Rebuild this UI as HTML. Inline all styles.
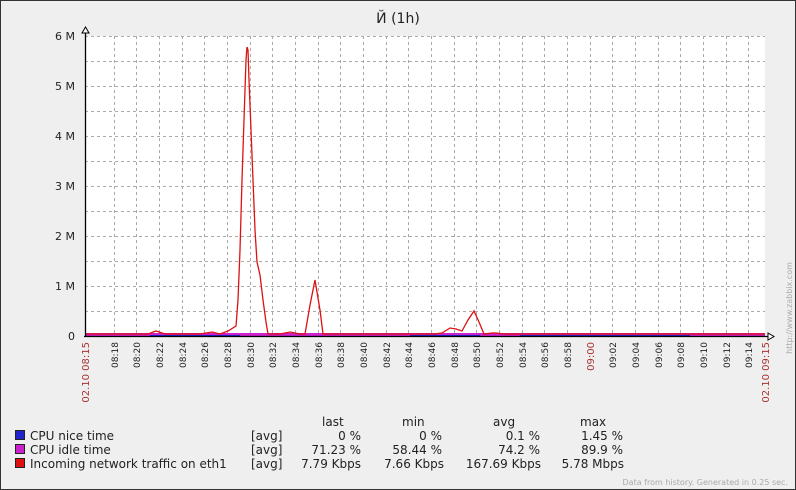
<!DOCTYPE html>
<html><head><meta charset="utf-8"><style>
body{margin:0;background:#efefef}
svg{display:block;font-family:"DejaVu Sans","Liberation Sans",sans-serif}
</style></head><body>
<svg width="796" height="490" viewBox="0 0 796 490" xmlns="http://www.w3.org/2000/svg">
<rect x="0.5" y="0.5" width="795" height="489" fill="#efefef" stroke="#333"/>
<text x="398" y="23" font-size="14" text-anchor="middle" fill="#222">Й (1h)</text>
<rect x="85" y="36" width="680" height="300" fill="#fff"/>
<g stroke="#aaa" stroke-dasharray="3,3" stroke-width="1">
<path d="M85 36.5H765M85 61.5H765M85 86.5H765M85 111.5H765M85 136.5H765M85 161.5H765M85 186.5H765M85 211.5H765M85 236.5H765M85 261.5H765M85 286.5H765M85 311.5H765"/>
<path d="M114.5 36V336M136.5 36V336M159.5 36V336M182.5 36V336M204.5 36V336M227.5 36V336M250.5 36V336M272.5 36V336M295.5 36V336M318.5 36V336M340.5 36V336M363.5 36V336M386.5 36V336M408.5 36V336M431.5 36V336M454.5 36V336M476.5 36V336M499.5 36V336M522.5 36V336M544.5 36V336M567.5 36V336M590.5 36V336M612.5 36V336M635.5 36V336M658.5 36V336M680.5 36V336M703.5 36V336M726.5 36V336M748.5 36V336"/>
</g>
<path d="M85 334.5H765" stroke="#cc22cc" stroke-width="3"/>
<path d="M150 335.5H240M410 335.5H480M520 335.5H690" stroke="#2222cc" stroke-width="1"/>
<polyline fill="none" stroke="#dd1111" stroke-width="1.3" points="85,334 148,334 156,331 165,334 200,334 212,332 220,334 228,331 236,326 238,300 240,250 242,180 244,120 246,60 247,47 248,50 249,80 251,130 253,180 255,230 257,262 260,275 263,300 266,322 268,334 280,334 290,332 300,334 305,334 310,305 315,280 320,310 323,334 434,334 442,333 450,328 456,329 462,331 468,320 474,311 479,322 484,334 492,333 496,333 505,334 765,334"/>
<path d="M85.5 30V337M84 336.5H772" stroke="#000" stroke-width="1.3"/>
<path d="M82 33L85.5 27L89 33Z" fill="#fff" stroke="#000"/>
<path d="M768 333L774 336.5L768 340Z" fill="#fff" stroke="#000"/>
<g font-size="11" fill="#222" text-anchor="end">
<text x="75" y="40">6 M</text><text x="75" y="90">5 M</text><text x="75" y="140">4 M</text><text x="75" y="190">3 M</text><text x="75" y="240">2 M</text><text x="75" y="290">1 M</text><text x="75" y="340">0</text>
</g>
<g font-size="9" fill="#222" text-anchor="end">
<text transform="translate(118,342) rotate(-90)">08:18</text>
<text transform="translate(140,342) rotate(-90)">08:20</text>
<text transform="translate(163,342) rotate(-90)">08:22</text>
<text transform="translate(186,342) rotate(-90)">08:24</text>
<text transform="translate(208,342) rotate(-90)">08:26</text>
<text transform="translate(231,342) rotate(-90)">08:28</text>
<text transform="translate(254,342) rotate(-90)">08:30</text>
<text transform="translate(276,342) rotate(-90)">08:32</text>
<text transform="translate(299,342) rotate(-90)">08:34</text>
<text transform="translate(322,342) rotate(-90)">08:36</text>
<text transform="translate(344,342) rotate(-90)">08:38</text>
<text transform="translate(367,342) rotate(-90)">08:40</text>
<text transform="translate(390,342) rotate(-90)">08:42</text>
<text transform="translate(412,342) rotate(-90)">08:44</text>
<text transform="translate(435,342) rotate(-90)">08:46</text>
<text transform="translate(458,342) rotate(-90)">08:48</text>
<text transform="translate(480,342) rotate(-90)">08:50</text>
<text transform="translate(503,342) rotate(-90)">08:52</text>
<text transform="translate(526,342) rotate(-90)">08:54</text>
<text transform="translate(548,342) rotate(-90)">08:56</text>
<text transform="translate(571,342) rotate(-90)">08:58</text>
<text transform="translate(594,342) rotate(-90)" fill="#aa3333" font-size="10">09:00</text>
<text transform="translate(616,342) rotate(-90)">09:02</text>
<text transform="translate(639,342) rotate(-90)">09:04</text>
<text transform="translate(662,342) rotate(-90)">09:06</text>
<text transform="translate(684,342) rotate(-90)">09:08</text>
<text transform="translate(707,342) rotate(-90)">09:10</text>
<text transform="translate(730,342) rotate(-90)">09:12</text>
<text transform="translate(752,342) rotate(-90)">09:14</text>
<text transform="translate(89,342) rotate(-90)" fill="#aa3333" font-size="10">02.10 08:15</text>
<text transform="translate(769,342) rotate(-90)" fill="#aa3333" font-size="10">02.10 09:15</text>
<text transform="translate(792,308) rotate(-90)" fill="#aaa" font-size="8" text-anchor="middle">http://www.zabbix.com</text>
</g>
<g font-size="12" fill="#222">
<text x="322" y="426">last</text><text x="402" y="426">min</text><text x="493" y="426">avg</text><text x="580" y="426">max</text>
<rect x="15.5" y="430.5" width="9" height="9" fill="#2222cc" stroke="#222"/>
<rect x="15.5" y="444.5" width="9" height="9" fill="#cc22cc" stroke="#222"/>
<rect x="15.5" y="458.5" width="9" height="9" fill="#dd1111" stroke="#222"/>
<text x="30" y="440">CPU nice time</text><text x="30" y="454">CPU idle time</text><text x="30" y="468">Incoming network traffic on eth1</text>
<text x="251" y="440">[avg]</text><text x="251" y="454">[avg]</text><text x="251" y="468">[avg]</text>
<g text-anchor="end">
<text x="361" y="440">0 %</text><text x="361" y="454">71.23 %</text><text x="361" y="468">7.79 Kbps</text>
<text x="442" y="440">0 %</text><text x="442" y="454">58.44 %</text><text x="444" y="468">7.66 Kbps</text>
<text x="540" y="440">0.1 %</text><text x="540" y="454">74.2 %</text><text x="541" y="468">167.69 Kbps</text>
<text x="623" y="440">1.45 %</text><text x="623" y="454">89.9 %</text><text x="624" y="468">5.78 Mbps</text>
</g>
</g>
<text x="788" y="485" font-size="8" fill="#aaa" text-anchor="end">Data from history. Generated in 0.25 sec.</text>
</svg>
</body></html>
